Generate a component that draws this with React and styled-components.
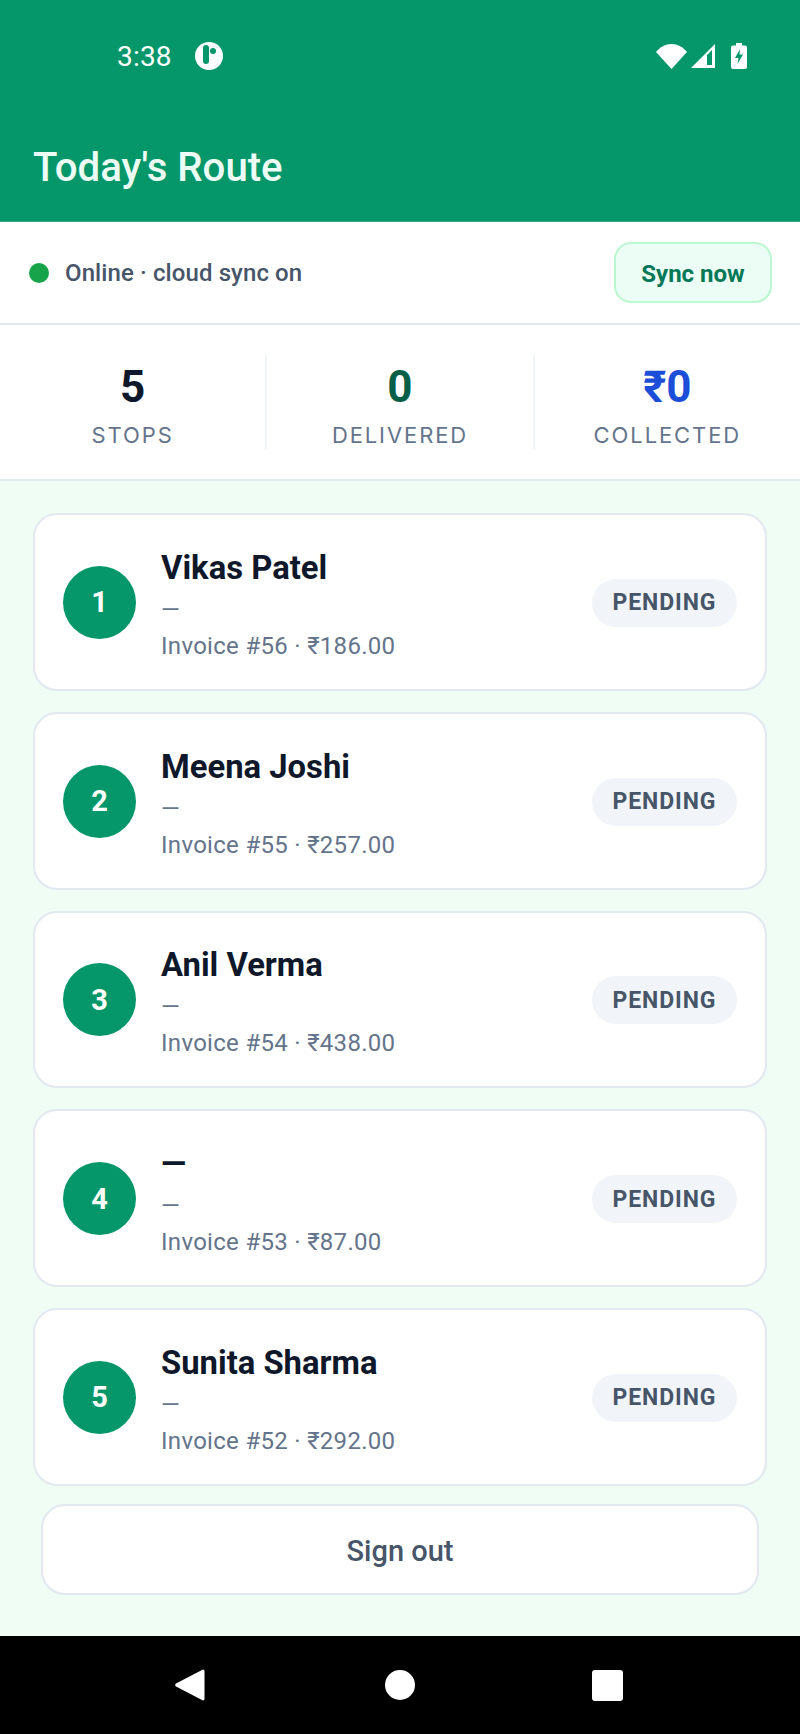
import React from 'react';
import styled, { createGlobalStyle } from 'styled-components';

const GlobalStyle = createGlobalStyle`
  html, body { margin: 0; padding: 0; }
  body { font-family: Roboto, "Liberation Sans", sans-serif; background: #effdf4; }
  * { box-sizing: border-box; }
`;

const Screen = styled.div`
  width: 800px;
  height: 1734px;
  display: flex;
  flex-direction: column;
  background: #effdf4;
  overflow: hidden;
`;

const Header = styled.header`
  height: 222px;
  flex: none;
  background: #059669;
  border-bottom: 1px solid #34a883;
`;

const StatusBar = styled.div`
  height: 112px;
  padding: 0 53px 0 117px;
  display: flex;
  align-items: center;
  color: #fff;
`;

const Clock = styled.span`
  font-size: 28px;
  letter-spacing: 0.2px;
  margin-right: 23px;
`;

const StatusRight = styled.div`
  margin-left: auto;
  display: flex;
  align-items: center;
  gap: 4px;
`;

const Title = styled.h1`
  margin: 0;
  padding: 32px 33px 0;
  font-size: 40.2px;
  line-height: 47px;
  font-weight: 500;
  color: #ecfdf5;
`;

const SyncBar = styled.div`
  height: 103px;
  flex: none;
  background: #fff;
  border-bottom: 2px solid #e2e8f0;
  display: flex;
  align-items: center;
  padding: 0 28px 0 29px;
`;

const Dot = styled.span`
  width: 20px;
  height: 20px;
  border-radius: 50%;
  background: #16a34a;
  margin-right: 16px;
`;

const SyncText = styled.span`
  font-size: 24px;
  font-weight: 500;
  letter-spacing: 0.1px;
  color: #475569;
`;

const SyncButton = styled.button`
  margin-left: auto;
  width: 158px;
  height: 61px;
  padding: 2px 0 0;
  border-radius: 17px;
  border: 2px solid #bbf7d0;
  background: #ecfdf5;
  color: #047857;
  font: 700 24px Roboto, sans-serif;
`;

const Stats = styled.section`
  height: 156px;
  flex: none;
  background: #fff;
  border-bottom: 2px solid #e2e8f0;
  display: grid;
  grid-template-columns: 1fr 2px 1fr 2px 1fr;
  align-items: center;
`;

const Stat = styled.div`
  height: 94px;
  display: flex;
  flex-direction: column;
  align-items: center;
  padding-top: 6px;
`;

const StatDivider = styled.div`
  height: 95px;
  margin-top: -1px;
  background: #f1f5f9;
`;

const StatValue = styled.div`
  font-size: 44px;
  line-height: 52px;
  font-weight: 700;
  color: ${(p) => p.$color};
`;

const StatLabel = styled.div`
  margin-top: 8px;
  font-family: Inter, Roboto, sans-serif;
  font-size: 22px;
  line-height: 28px;
  letter-spacing: 1.9px;
  color: #64748b;
`;

const List = styled.main`
  flex: 1;
  padding: 32px 33px 0;
  display: flex;
  flex-direction: column;
  gap: 21px;
`;

const Card = styled.article`
  height: 177.75px;
  flex: none;
  background: #fff;
  border: 2px solid #e2e8f0;
  border-radius: 24px;
  padding: 0 28px;
  display: flex;
  align-items: center;
`;

const Badge = styled.div`
  width: 73px;
  height: 73px;
  flex: none;
  margin: 1px 25px 0 0;
  border-radius: 50%;
  background: #059669;
  color: #fff;
  font-size: 29px;
  font-weight: 700;
  display: flex;
  align-items: center;
  justify-content: center;
`;

const Info = styled.div`
  flex: 1;
  padding-top: 4px;
  display: flex;
  flex-direction: column;
`;

const Name = styled.div`
  font-size: 32.8px;
  line-height: 40px;
  font-weight: 700;
  color: #0f172a;
`;

const Sub = styled.div`
  font-size: 24px;
  line-height: 45px;
  color: #64748b;
`;

const Meta = styled.div`
  font-size: 24px;
  line-height: 27px;
  color: #64748b;
  letter-spacing: 0.3px;
`;

const Pill = styled.span`
  width: 145px;
  height: 48px;
  margin-top: 2px;
  border-radius: 24px;
  background: #f1f5f9;
  color: #475569;
  font-size: 23px;
  font-weight: 700;
  letter-spacing: 0.9px;
  display: flex;
  align-items: center;
  justify-content: center;
`;

const SignOut = styled.button`
  margin: -3px 8px 0;
  height: 91px;
  flex: none;
  padding: 3px 0 0;
  background: #fff;
  border: 2px solid #e2e8f0;
  border-radius: 24px;
  color: #475569;
  font: 500 29px Roboto, sans-serif;
`;

const NavBar = styled.nav`
  height: 98px;
  flex: none;
  background: #000;
  display: grid;
  grid-template-columns: 175px 30px 180px 30px 177px 31px 1fr;
  align-items: center;
`;

const stops = [
  { name: 'Vikas Patel', invoice: 'Invoice #56 · ₹186.00' },
  { name: 'Meena Joshi', invoice: 'Invoice #55 · ₹257.00' },
  { name: 'Anil Verma', invoice: 'Invoice #54 · ₹438.00' },
  { name: '—', invoice: 'Invoice #53 · ₹87.00' },
  { name: 'Sunita Sharma', invoice: 'Invoice #52 · ₹292.00' },
];

const App = () => (
  <Screen>
    <GlobalStyle />
    <Header>
      <StatusBar>
        <Clock>3:38</Clock>
        <svg width="28" height="28" viewBox="0 0 28 28">
          <circle cx="14" cy="14" r="14" fill="#fff" />
          <rect x="8" y="3" width="6" height="19" rx="3" fill="#059669" />
          <circle cx="18" cy="9" r="3" fill="#059669" />
        </svg>
        <StatusRight>
          <svg width="31" height="25" viewBox="0 0 31 25">
            <path d="M0 8C4 3 9.500 0 15.500 0S27 3 31 8L15.500 25z" fill="#fff" />
          </svg>
          <svg width="24" height="24" viewBox="0 0 24 24">
            <path d="M24 0v24H0zM16 11 21 6v15h-5z" fill="#fff" fillRule="evenodd" />
          </svg>
          <svg width="16" height="26" viewBox="0 0 16 26" style={{ marginLeft: 12 }}>
            <path d="M5 0h6v2.500h3a2 2 0 0 1 2 2V24a2 2 0 0 1-2 2H2a2 2 0 0 1-2-2V4.500a2 2 0 0 1 2-2h3z" fill="#fff" />
            <path d="M9 6 4 15h3.500l-1 6 5.500-9.500H8.500z" fill="#059669" />
          </svg>
        </StatusRight>
      </StatusBar>
      <Title>Today's Route</Title>
    </Header>
    <SyncBar>
      <Dot />
      <SyncText>Online · cloud sync on</SyncText>
      <SyncButton>Sync now</SyncButton>
    </SyncBar>
    <Stats>
      <Stat>
        <StatValue $color="#0f172a">5</StatValue>
        <StatLabel>STOPS</StatLabel>
      </Stat>
      <StatDivider />
      <Stat>
        <StatValue $color="#065f46">0</StatValue>
        <StatLabel>DELIVERED</StatLabel>
      </Stat>
      <StatDivider />
      <Stat>
        <StatValue $color="#1d4ed8">₹0</StatValue>
        <StatLabel>COLLECTED</StatLabel>
      </Stat>
    </Stats>
    <List>
      {stops.map((s, i) => (
        <Card key={s.invoice}>
          <Badge>{i + 1}</Badge>
          <Info>
            <Name>{s.name}</Name>
            <Sub>—</Sub>
            <Meta>{s.invoice}</Meta>
          </Info>
          <Pill>PENDING</Pill>
        </Card>
      ))}
      <SignOut>Sign out</SignOut>
    </List>
    <NavBar>
      <span />
      <svg width="30" height="34" viewBox="0 0 30 34">
        <path d="M28 1.500a1.500 1.500 0 0 1 1.500 1.500v28a1.500 1.500 0 0 1-2.500 1L1 18.500a2 2 0 0 1 0-3L27 2z" fill="#fff" />
      </svg>
      <span />
      <svg width="30" height="30" viewBox="0 0 30 30">
        <circle cx="15" cy="15" r="15" fill="#fff" />
      </svg>
      <span />
      <svg width="31" height="31" viewBox="0 0 31 31">
        <rect width="31" height="31" rx="3" fill="#fff" />
      </svg>
    </NavBar>
  </Screen>
);

export default App;
